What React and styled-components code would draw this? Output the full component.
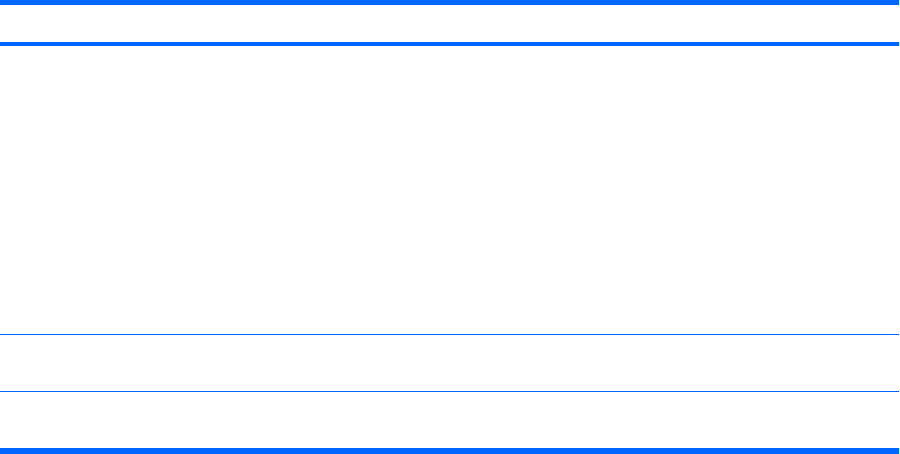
import React from 'react'
import styled, {createGlobalStyle} from 'styled-components'

const Global = createGlobalStyle`
body {
	margin:0;
	background:#fff;
	font-family:"Liberation Sans", Arial, sans-serif;
}
`

export default function App() {
  return (
  	<>
  	<Global/>
  	<Table>
  		<HeadRow/>
  		<Row height={288}/>
  		<Row height={56} divider/>
  		<Row height={56} divider/>
  	</Table>
  	</>
  )
}

const Table = styled.div`
width:899px;
display:flex;
flex-direction:column;
border-top:5px solid #0066ff;
border-bottom:6px solid #0066ff;
`
const HeadRow = styled.div`
height:37px;
border-bottom:4px solid #0066ff;
`
const Row = styled.div`
height:${p => p.height}px;
border-top:${p => p.divider ? '1px solid #0066ff' : 'none'};
`
